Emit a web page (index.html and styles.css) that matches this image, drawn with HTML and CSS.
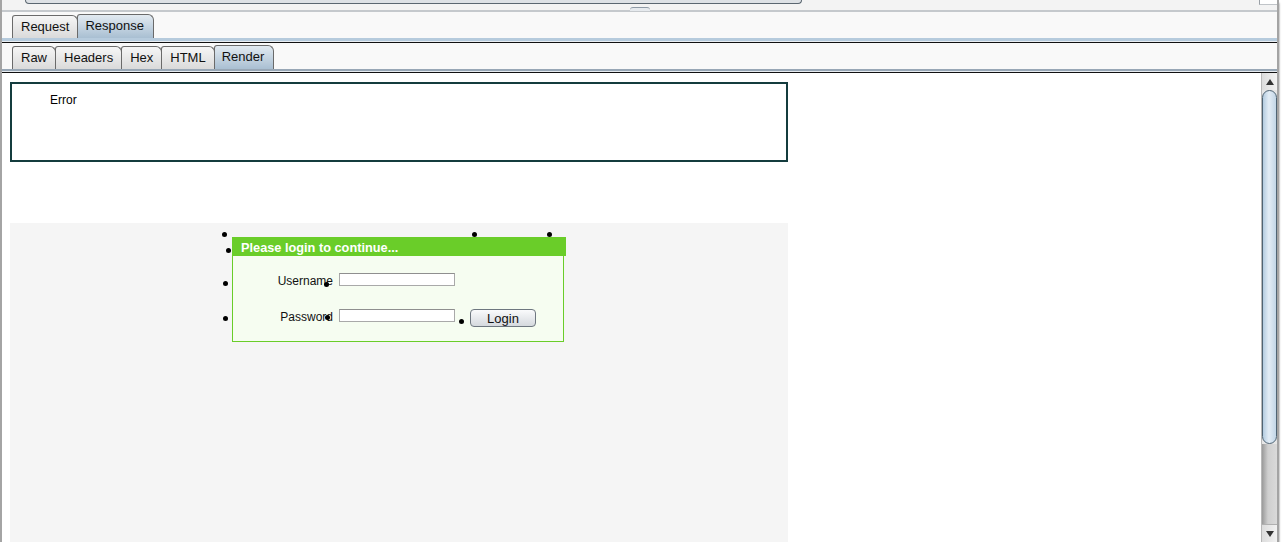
FILE: index.html
```html
<!DOCTYPE html>
<html>
<head>
<meta charset="utf-8">
<title>Response Render</title>
<link rel="stylesheet" href="styles.css">
</head>
<body>
<div class="frame">
  <div class="top-strip">
    <div class="prev-field"></div>
    <div class="prev-right"></div>
  </div>
  <div class="splitter"><span class="grip"></span></div>

  <div class="tabbar">
    <div class="tab">Request</div>
    <div class="tab selected">Response</div>
  </div>
  <div class="tabline blue"></div>

  <div class="tabbar">
    <div class="tab">Raw</div>
    <div class="tab">Headers</div>
    <div class="tab">Hex</div>
    <div class="tab">HTML</div>
    <div class="tab selected">Render</div>
  </div>
  <div class="tabline gray"></div>

  <div class="content">
    <div class="render">
      <div class="error-box">Error</div>
      <div class="page-area">
        <div class="login">
          <div class="login-head">Please login to continue...</div>
          <div class="login-body">
            <div class="row">
              <label class="lbl">Username</label>
              <div class="field"></div>
            </div>
            <div class="row second">
              <label class="lbl">Password</label>
              <div class="field"></div>
              <button class="btn">Login</button>
            </div>
          </div>
        </div>
        <span class="dot d1"></span>
        <span class="dot d2"></span>
        <span class="dot d3"></span>
        <span class="dot d4"></span>
        <span class="dot d5"></span>
        <span class="dot d6"></span>
        <span class="dot d7"></span>
        <span class="dot d8"></span>
        <span class="dot d9"></span>
      </div>
    </div>
    <div class="scrollbar">
      <div class="sb-btn up"><span class="tri-up"></span></div>
      <div class="sb-thumb"></div>
      <div class="sb-track"></div>
      <div class="sb-btn down"><span class="tri-down"></span></div>
    </div>
  </div>
</div>
</body>
</html>
```

FILE: styles.css
```css
* { box-sizing: border-box; }
html, body {
  margin: 0;
  padding: 0;
  background: #ffffff;
  font-family: "Liberation Sans", Arial, sans-serif;
  color: #000;
}
.frame {
  position: relative;
  width: 1279px;
  height: 542px;
  border-left: 2px solid #a4a4a4;
  border-right: 2px solid #a4a4a4;
  display: flex;
  flex-direction: column;
  background: #f9f9f9;
  box-shadow: 0 3px 2px rgba(0,0,0,0.55);
  overflow: hidden;
}
.top-strip {
  height: 10px;
  display: flex;
  background: #f3f3f3;
  flex-shrink: 0;
}
.prev-field {
  margin-left: 23px;
  width: 777px;
  height: 4px;
  border: 1px solid #5a6670;
  border-top: none;
  border-radius: 0 0 10px 10px;
  background: #dde1e5;
}
.prev-right {
  margin-left: auto;
  width: 18px;
  height: 5px;
  background: #ffffff;
  border-left: 1px solid #9aa0a6;
  border-bottom: 1px solid #c0c4c8;
}
.splitter {
  position: relative;
  height: 2px;
  background: #c5c9cd;
  flex-shrink: 0;
}
.grip {
  position: absolute;
  left: 628px;
  top: -3px;
  width: 20px;
  height: 4px;
  border-top: 1px solid #8e9aa6;
  border-radius: 3px 3px 0 0;
  background: #e6eaee;
}
.tabbar {
  height: 26px;
  display: flex;
  align-items: flex-end;
  padding-left: 10px;
  background: #f9f9f9;
  flex-shrink: 0;
}
.tab {
  height: 23px;
  padding: 0 8px;
  margin-right: -1px;
  border: 1px solid #6a6a6a;
  border-bottom: none;
  border-radius: 3px 6px 0 0;
  background: linear-gradient(#f6f6f6, #dadada);
  font-size: 13px;
  line-height: 22px;
  color: #111;
}
.tab.selected {
  height: 24px;
  padding: 0 9px 0 7px;
  background: linear-gradient(#e2eaf1, #a9bfd2);
}
.tabline {
  height: 5px;
  flex-shrink: 0;
}
.tabline.blue {
  border-top: 3px solid #b6cbdd;
  border-bottom: 1px solid #111;
  background: #e9eef3;
}
.tabline.gray {
  height: 4px;
  border-top: 2px solid #98a7b6;
  border-bottom: 1px solid #111;
  background: #e6ebf0;
}
.content {
  flex: 1;
  display: flex;
  background: #ffffff;
  min-height: 0;
}
.render {
  flex: 1;
  display: flex;
  flex-direction: column;
  padding-left: 8px;
}
.error-box {
  margin-top: 9px;
  width: 778px;
  height: 80px;
  border: 2px solid #143c3e;
  padding: 9px 0 0 38px;
  font-size: 12px;
  line-height: 14px;
}
.page-area {
  position: relative;
  margin-top: 61px;
  width: 778px;
  flex: 1;
  background: #f5f5f5;
  padding: 14px 0 0 222px;
}
.login {
  width: 334px;
}
.login-head {
  height: 19px;
  background: #6acd29;
  color: #ffffff;
  font-weight: bold;
  font-size: 12.75px;
  line-height: 17px;
  padding: 2px 0 0 9px;
  white-space: nowrap;
}
.login-body {
  width: 332px;
  height: 86px;
  border: 1px solid #6acd29;
  border-top: none;
  background: #f6fdf1;
  padding-top: 17px;
}
.row {
  display: flex;
  align-items: flex-start;
}
.row.second { margin-top: 21px; }
.lbl {
  width: 100px;
  text-align: right;
  font-size: 12px;
  line-height: 13px;
  padding-top: 2px;
  margin-right: 6px;
  color: #111;
}
.field {
  width: 116px;
  height: 13px;
  background: #ffffff;
  border: 1px solid #a9a9a9;
  border-top-color: #8f8f8f;
}
.btn {
  margin-left: 15px;
  width: 66px;
  height: 18px;
  padding: 0;
  border: 1px solid #6e7780;
  border-radius: 4px;
  background: linear-gradient(#fafbfc, #d5d9de);
  font-family: "Liberation Sans", Arial, sans-serif;
  font-size: 13px;
  line-height: 15px;
  color: #111;
}
.dot {
  position: absolute;
  width: 5px;
  height: 5px;
  border-radius: 50%;
  background: #000;
}
.d1 { left: 212px; top: 9px; }
.d2 { left: 462px; top: 9px; }
.d3 { left: 537px; top: 9px; }
.d4 { left: 216px; top: 25px; }
.d5 { left: 213px; top: 58px; }
.d6 { left: 314px; top: 59px; }
.d7 { left: 213px; top: 93px; }
.d8 { left: 315px; top: 92px; }
.d9 { left: 449px; top: 96px; }
.scrollbar {
  width: 16px;
  display: flex;
  flex-direction: column;
  border-left: 1px solid #b8b8b8;
  background: #e6e6e6;
}
.sb-btn {
  display: flex;
  align-items: center;
  justify-content: center;
  background: linear-gradient(90deg, #dcdcdc, #f2f2f2);
}
.sb-btn.up { height: 17px; }
.sb-btn.down { height: 18px; border-top: 1px solid #b0b0b0; }
.tri-up {
  width: 0; height: 0;
  border-left: 4px solid transparent;
  border-right: 4px solid transparent;
  border-bottom: 6px solid #333;
}
.tri-down {
  width: 0; height: 0;
  border-left: 4px solid transparent;
  border-right: 4px solid transparent;
  border-top: 6px solid #333;
}
.sb-thumb {
  height: 354px;
  border: 1px solid #4f6474;
  border-radius: 8px;
  background: linear-gradient(90deg, #b4cce0, #e3edf6 45%, #c2d6e7);
}
.sb-track {
  flex: 1;
  background: linear-gradient(90deg, #9a9a9a, #cfcfcf 40%, #dadada);
}
```
